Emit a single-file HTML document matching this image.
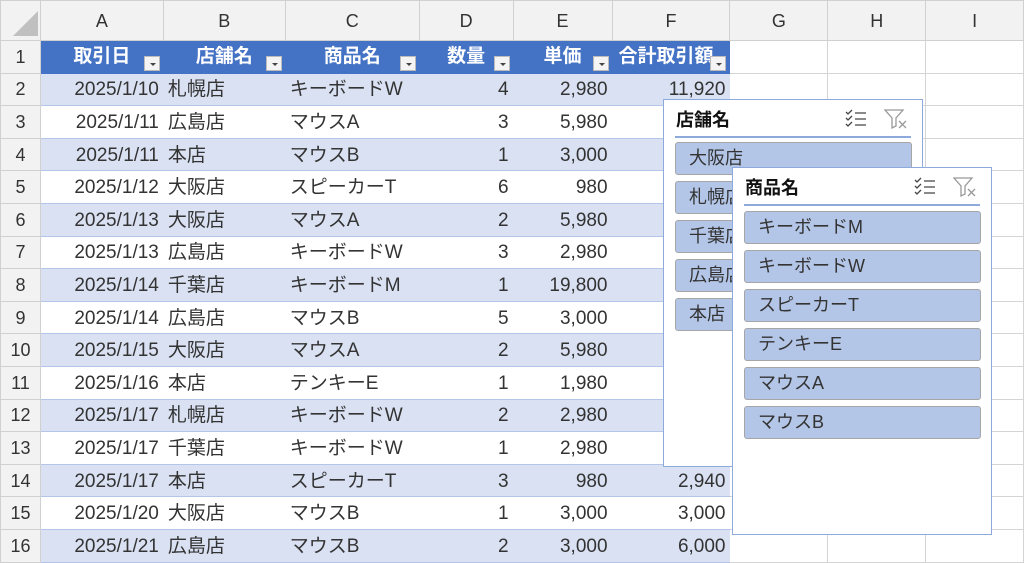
<!DOCTYPE html>
<html><head><meta charset="utf-8"><style>
*{margin:0;padding:0;box-sizing:border-box}
body{width:1024px;height:562px;overflow:hidden;background:#fff;font-family:"Liberation Sans","Noto Sans CJK JP",sans-serif;position:relative}
table{border-collapse:collapse;table-layout:fixed;position:absolute;left:0;top:0}
td{border:1px solid #D4D4D4;font-size:19px;color:#333;white-space:nowrap;overflow:hidden;padding:2px 4px 0;height:32.6px;line-height:26px}
tr.h td{height:40px;background:#F2F2F2;text-align:center;color:#333;font-size:18px;border-color:#D0D0D0;padding-top:0}
td.rh{background:#F2F2F2;text-align:center;color:#333;font-size:18px;border-color:#D0D0D0;padding:0}
td.r{text-align:right}
tr.b td.c{background:#D9E1F2}
tr.b td.c{border-left-color:#D9E1F2;border-right-color:#D9E1F2;border-top-color:#B4C6E7;border-bottom-color:#B4C6E7}
tr.w td.c{border-left-color:#fff;border-right-color:#fff;border-top-color:#B4C6E7;border-bottom-color:#B4C6E7}
tr.t td.c{background:#4472C4;color:#fff;font-weight:bold;text-align:center;position:relative;border-color:#4472C4;padding-top:0}
.fb{position:absolute;right:3px;bottom:2px;width:16px;height:15px;background:#F4F4F4;border:1px solid #BBB}
.fb:after{content:"";position:absolute;left:5px;top:6px;border-left:3px solid transparent;border-right:3px solid transparent;border-top:3px solid #444}
.corner{position:absolute;left:12px;top:10px;width:0;height:0;border-left:25px solid transparent;border-bottom:25px solid #C0C0C0}
.sl{position:absolute;background:#fff;border:1px solid #8EA9DB;width:260px;height:368px}
.sl .tt{position:absolute;left:12px;top:6px;font-size:18px;font-weight:bold;color:#111}
.sl .ln{position:absolute;left:11px;right:11px;top:36px;height:2px;background:#8EA9DB}
.sl .it{position:absolute;left:11px;width:237px;height:33px;background:#B4C6E7;border:1px solid #A6A6A6;border-radius:3px;font-size:18px;line-height:26px;color:#333;padding:2px 0 0 13px;white-space:nowrap;overflow:hidden}
.ic{position:absolute;top:8px}
</style></head><body>
<table>
<colgroup><col style="width:40px"><col style="width:123px"><col style="width:122px"><col style="width:134px"><col style="width:94px"><col style="width:99px"><col style="width:118px"><col style="width:98px"><col style="width:98px"><col style="width:98px"></colgroup>
<tr class="h"><td style="position:relative"><div class="corner"></div></td><td>A</td><td>B</td><td>C</td><td>D</td><td>E</td><td>F</td><td>G</td><td>H</td><td>I</td></tr>
<tr class="t"><td class="rh">1</td><td class="c">取引日<span class="fb"></span></td><td class="c">店舗名<span class="fb"></span></td><td class="c">商品名<span class="fb"></span></td><td class="c">数量<span class="fb"></span></td><td class="c">単価<span class="fb"></span></td><td class="c" style="text-align:left;padding-left:6px">合計取引額<span class="fb"></span></td><td></td><td></td><td></td></tr>
<tr class="b"><td class="rh">2</td><td class="c r">2025/1/10</td><td class="c">札幌店</td><td class="c">キーボードW</td><td class="c r">4</td><td class="c r">2,980</td><td class="c r">11,920</td><td></td><td></td><td></td></tr>
<tr class="w"><td class="rh">3</td><td class="c r">2025/1/11</td><td class="c">広島店</td><td class="c">マウスA</td><td class="c r">3</td><td class="c r">5,980</td><td class="c r">17,940</td><td></td><td></td><td></td></tr>
<tr class="b"><td class="rh">4</td><td class="c r">2025/1/11</td><td class="c">本店</td><td class="c">マウスB</td><td class="c r">1</td><td class="c r">3,000</td><td class="c r">3,000</td><td></td><td></td><td></td></tr>
<tr class="w"><td class="rh">5</td><td class="c r">2025/1/12</td><td class="c">大阪店</td><td class="c">スピーカーT</td><td class="c r">6</td><td class="c r">980</td><td class="c r">5,880</td><td></td><td></td><td></td></tr>
<tr class="b"><td class="rh">6</td><td class="c r">2025/1/13</td><td class="c">大阪店</td><td class="c">マウスA</td><td class="c r">2</td><td class="c r">5,980</td><td class="c r">11,960</td><td></td><td></td><td></td></tr>
<tr class="w"><td class="rh">7</td><td class="c r">2025/1/13</td><td class="c">広島店</td><td class="c">キーボードW</td><td class="c r">3</td><td class="c r">2,980</td><td class="c r">8,940</td><td></td><td></td><td></td></tr>
<tr class="b"><td class="rh">8</td><td class="c r">2025/1/14</td><td class="c">千葉店</td><td class="c">キーボードM</td><td class="c r">1</td><td class="c r">19,800</td><td class="c r">19,800</td><td></td><td></td><td></td></tr>
<tr class="w"><td class="rh">9</td><td class="c r">2025/1/14</td><td class="c">広島店</td><td class="c">マウスB</td><td class="c r">5</td><td class="c r">3,000</td><td class="c r">15,000</td><td></td><td></td><td></td></tr>
<tr class="b"><td class="rh">10</td><td class="c r">2025/1/15</td><td class="c">大阪店</td><td class="c">マウスA</td><td class="c r">2</td><td class="c r">5,980</td><td class="c r">11,960</td><td></td><td></td><td></td></tr>
<tr class="w"><td class="rh">11</td><td class="c r">2025/1/16</td><td class="c">本店</td><td class="c">テンキーE</td><td class="c r">1</td><td class="c r">1,980</td><td class="c r">1,980</td><td></td><td></td><td></td></tr>
<tr class="b"><td class="rh">12</td><td class="c r">2025/1/17</td><td class="c">札幌店</td><td class="c">キーボードW</td><td class="c r">2</td><td class="c r">2,980</td><td class="c r">5,960</td><td></td><td></td><td></td></tr>
<tr class="w"><td class="rh">13</td><td class="c r">2025/1/17</td><td class="c">千葉店</td><td class="c">キーボードW</td><td class="c r">1</td><td class="c r">2,980</td><td class="c r">2,980</td><td></td><td></td><td></td></tr>
<tr class="b"><td class="rh">14</td><td class="c r">2025/1/17</td><td class="c">本店</td><td class="c">スピーカーT</td><td class="c r">3</td><td class="c r">980</td><td class="c r">2,940</td><td></td><td></td><td></td></tr>
<tr class="w"><td class="rh">15</td><td class="c r">2025/1/20</td><td class="c">大阪店</td><td class="c">マウスB</td><td class="c r">1</td><td class="c r">3,000</td><td class="c r">3,000</td><td></td><td></td><td></td></tr>
<tr class="b"><td class="rh">16</td><td class="c r">2025/1/21</td><td class="c">広島店</td><td class="c">マウスB</td><td class="c r">2</td><td class="c r">3,000</td><td class="c r">6,000</td><td></td><td></td><td></td></tr>
</table>

<div class="sl" style="left:663px;top:99px">
<div class="tt">店舗名</div>
<svg class="ic" style="left:180px" width="24" height="22" viewBox="0 0 24 22" fill="none" stroke="#444" stroke-width="1.3"><path d="M2 4l2 2 4-4M2 10l2 2 4-4M2 16l2 2 4-4M11 5h11M11 11h11M11 17h11"/></svg>
<svg class="ic" style="left:220px" width="24" height="22" viewBox="0 0 24 22" fill="none" stroke="#999" stroke-width="1.3"><path d="M1 2h18l-7 8v8l-4 2V10z"/><path d="M15 13l7 7M22 13l-7 7"/></svg>
<div class="ln"></div>
<div class="it" style="top:42px">大阪店</div>
<div class="it" style="top:81px">札幌店</div>
<div class="it" style="top:120px">千葉店</div>
<div class="it" style="top:159px">広島店</div>
<div class="it" style="top:198px">本店</div>
</div>

<div class="sl" style="left:732px;top:167px">
<div class="tt">商品名</div>
<svg class="ic" style="left:180px" width="24" height="22" viewBox="0 0 24 22" fill="none" stroke="#444" stroke-width="1.3"><path d="M2 4l2 2 4-4M2 10l2 2 4-4M2 16l2 2 4-4M11 5h11M11 11h11M11 17h11"/></svg>
<svg class="ic" style="left:220px" width="24" height="22" viewBox="0 0 24 22" fill="none" stroke="#999" stroke-width="1.3"><path d="M1 2h18l-7 8v8l-4 2V10z"/><path d="M15 13l7 7M22 13l-7 7"/></svg>
<div class="ln"></div>
<div class="it" style="top:43px">キーボードM</div>
<div class="it" style="top:82px">キーボードW</div>
<div class="it" style="top:121px">スピーカーT</div>
<div class="it" style="top:160px">テンキーE</div>
<div class="it" style="top:199px">マウスA</div>
<div class="it" style="top:238px">マウスB</div>
</div>
</body></html>
